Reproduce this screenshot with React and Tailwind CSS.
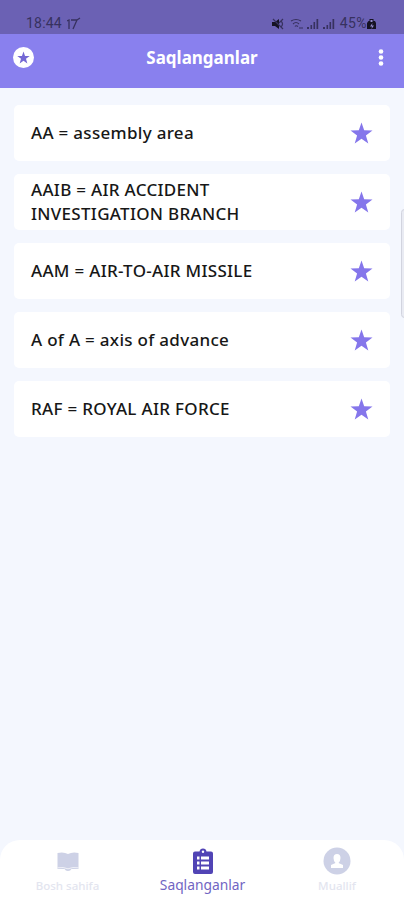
// src/App.jsx

const WORDS = [
  { id: 1, text: "AA = assembly area" },
  { id: 2, text: "AAIB = AIR ACCIDENT INVESTIGATION BRANCH" },
  { id: 3, text: "AAM = AIR-TO-AIR MISSILE" },
  { id: 4, text: "A of A = axis of advance" },
  { id: 5, text: "RAF = ROYAL AIR FORCE" },
];

const STAR =
  "M12 0.5L14.8 8.6L23.5 8.8L16.6 14L19.1 22.4L12 17.5L4.9 22.4L7.4 14L0.5 8.8L9.2 8.6Z";

function StarIcon({ className = "" }) {
  return (
    <svg viewBox="0 0 24 23" className={className} fill="currentColor">
      <path d={STAR} />
    </svg>
  );
}

function Signal() {
  return (
    <svg viewBox="0 0 12 12" className="h-3 w-3" fill="currentColor">
      <path d="M0 9h2v2H0zM3.5 7h1.6v4H3.5zM6.5 4h1.6v7H6.5z" />
      <path d="M9.5 1h1.7v10H9.5z" />
    </svg>
  );
}

function StatusBar() {
  return (
    <div className="flex h-[34px] items-end justify-between bg-[#6b61b4] pr-[28px] pb-[3px] pl-[26px] text-[#37315f]">
      <div className="flex h-[15px] items-center gap-[5px] font-[Roboto] text-[14px] tracking-[0.2px]">
        <span>18:44</span>
        <svg viewBox="0 0 14 13" className="h-[13px] w-[14px]" fill="none" stroke="currentColor" strokeWidth="1.3">
          <path d="M0 4l2-1v9M4 3h6L6 12M10 3l3-2" />
        </svg>
      </div>
      <div className="flex h-[15px] items-center font-[Roboto] text-[14px]">
        <svg viewBox="0 0 12 12" className="mr-[6px] h-3 w-3">
          <path d="M0 4h3l4-3v10L3 8H0z" fill="#151223" />
          <path d="M1 1l10 10M9 3q3 3 0 6M11 1L7 5" fill="none" stroke="currentColor" strokeWidth="1.2" />
        </svg>
        <svg viewBox="0 0 14 12" className="mr-[3px] h-3 w-[14px]" fill="none" stroke="currentColor" strokeWidth="1.1">
          <path d="M1 3q5-3 10 0M3 6q3-3 6 0M5 8.5q1-1.500 3 0M9 10h4" />
        </svg>
        <Signal />
        <span className="w-[4px]" />
        <Signal />
        <span className="ml-[5px] tracking-[0.4px]">45%</span>
        <svg viewBox="0 0 9 12" className="h-3 w-[9px]">
          <path d="M2.500 1h4v2H8l1 2v6H0V5l1.500-2h1z" fill="#151223" />
          <path d="M3.500 2h2v2h-2zM5.500 5L3 8.500h2l-.5 2.500L7 7.500H5z" fill="#938bd0" />
        </svg>
      </div>
    </div>
  );
}

function Header() {
  return (
    <header className="flex h-[54px] items-center justify-between bg-[#8980ee] pr-[20px] pb-[7px] pl-[13px]">
      <span className="flex h-[21px] w-[21px] items-center justify-center rounded-full bg-white">
        <StarIcon className="h-[13px] w-[13px] text-[#7468d4]" />
      </span>
      <h1 className="mr-[8px] text-[17px] leading-6 font-bold text-white">Saqlanganlar</h1>
      <svg viewBox="0 0 6 17" className="h-[17px] w-[6px]" fill="white">
        <circle cx="3" cy="2.500" r="2.300" />
        <circle cx="3" cy="8.500" r="2.300" />
        <circle cx="3" cy="14.500" r="2.300" />
      </svg>
    </header>
  );
}

function WordCard({ word }) {
  return (
    <li className="flex h-[56px] items-center justify-between rounded-[5px] bg-white pr-[17px] pl-[17px]">
      <p className="w-[260px] pb-px text-[17px] leading-[24px] font-medium tracking-[0.3px] text-[#171717]">{word.text}</p>
      <StarIcon className="h-[22px] w-[23px] text-[#8576eb]" />
    </li>
  );
}

function BottomNav() {
  return (
    <nav className="flex h-[60px] justify-between rounded-t-[20px] bg-white pt-[6px] pr-[47px] pl-[35px]">
      <div className="flex w-[65px] flex-col items-center text-[#cdd1e6]">
        <svg viewBox="0 0 22 30" className="h-[30px] w-[22px]" fill="currentColor">
          <path d="M.5 7q6-1.500 10.500 1q4.500-2.500 10.500-1v16h-7q-1 2-3.500 2t-3.500-2h-7z" />
          <path d="M.5 21.800q6-1 10.500 1q4.500-2 10.500-1" fill="none" stroke="white" strokeWidth=".7" />
        </svg>
        <span className="text-[11.5px] leading-[20px] font-medium whitespace-nowrap text-[#e3e5ef]">Bosh sahifa</span>
      </div>
      <div className="mr-[12px] flex w-[85px] flex-col items-center text-[#5144b5]">
        <svg viewBox="0 0 20 26" className="mt-[2px] h-[26px] w-[20px]" fill="currentColor">
          <path d="M2 3.500h4.500q.5-3 3.500-3t3.500 3H18q2 0 2 2v18.500q0 2-2 2H2q-2 0-2-2V5.500q0-2 2-2z" />
          <circle cx="10" cy="3.800" r="1.200" fill="white" />
          <path d="M4 10h2.500M8 10h8M4 15h2.500M8 15h8M4 20h2.500M8 20h8" stroke="white" strokeWidth="2.800" />
        </svg>
        <span className="mt-px text-[13.8px] leading-[20px] whitespace-nowrap text-[#7165c3]">Saqlanganlar</span>
      </div>
      <div className="flex w-[40px] flex-col items-center text-[#cdd1e6]">
        <svg viewBox="0 0 28 30" className="h-[30px] w-[28px]">
          <circle cx="14" cy="15" r="13.500" fill="currentColor" />
          <path d="M10.500 12a3.500 4 0 117 0q0 3-2 5l4.500 2v3H8v-3l4.500-2q-2-2-2-5z" fill="white" />
        </svg>
        <span className="text-[11.5px] leading-[20px] font-medium whitespace-nowrap text-[#e3e5ef]">Muallif</span>
      </div>
    </nav>
  );
}

export default function App() {
  return (
    <div className="relative flex h-[900px] w-[404px] flex-col overflow-hidden bg-[#f4f7fe] font-['Noto_Sans',sans-serif]">
      <StatusBar />
      <Header />
      <ul className="flex flex-1 flex-col gap-[13px] px-[14px] pt-[17px]">
        {WORDS.map((word) => (
          <WordCard key={word.id} word={word} />
        ))}
      </ul>
      <BottomNav />
      {/* edge panel handle */}
      <div className="absolute top-[209px] -right-[4px] h-[109px] w-[7px] rounded-[4px] border border-[#d2d4df] bg-[#e9ebf3]" />
    </div>
  );
}
